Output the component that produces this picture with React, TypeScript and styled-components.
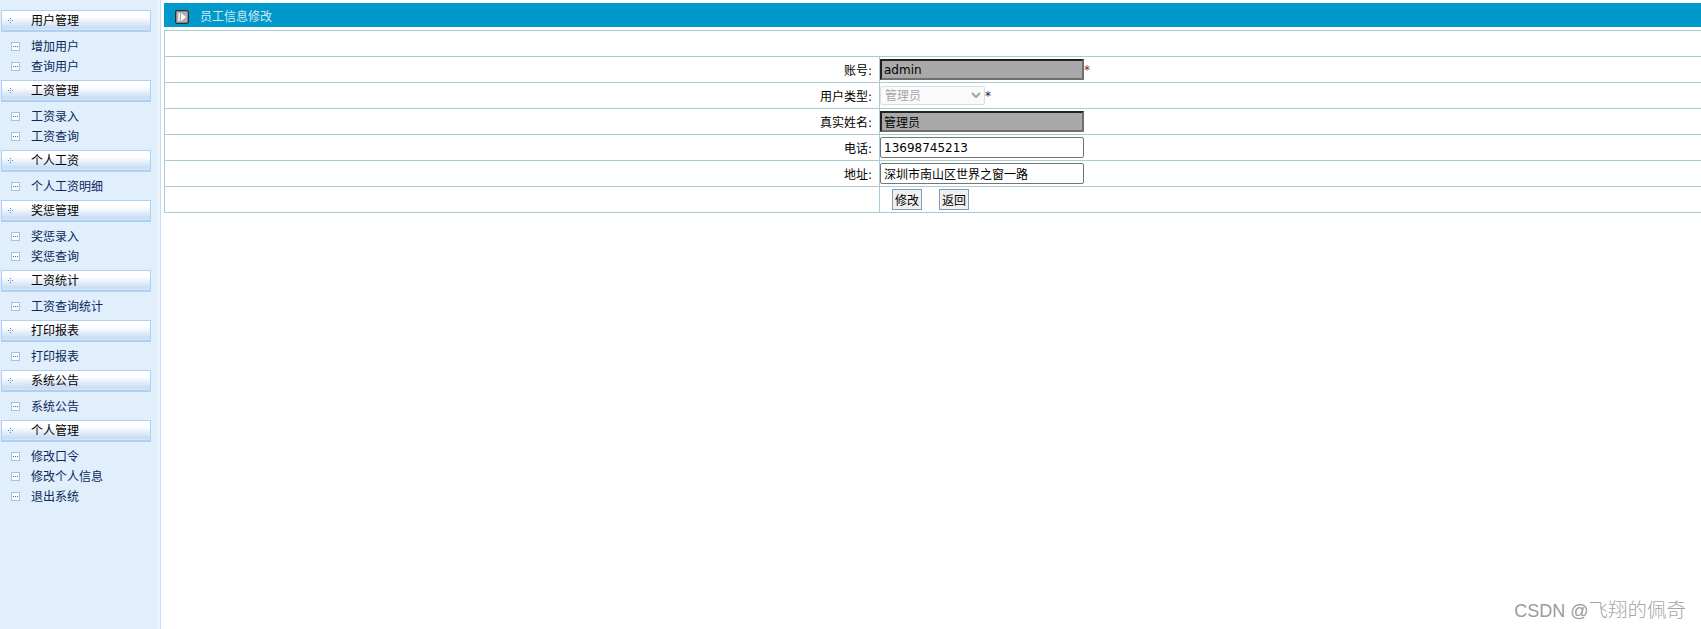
import styled, { createGlobalStyle } from "styled-components";

const GlobalStyle = createGlobalStyle`
  html, body {
    margin: 0;
    padding: 0;
    height: 100%;
    overflow: hidden;
    background: #fff;
  }
  #root {
    height: 100%;
  }
`;

const font = `"DejaVu Sans", "Noto Sans CJK SC", sans-serif`;

const Page = styled.div`
  display: flex;
  height: 100%;
  font: 12px ${font};
  color: #000;
`;

const Sidebar = styled.aside`
  width: 156px;
  flex: none;
  padding-top: 10px;
  box-sizing: border-box;
  background: #e1eefb;
`;

const SideEdge = styled.div`
  width: 4px;
  flex: none;
  background: linear-gradient(to right, #e1eefb, #edf4fc);
`;

const SideLine = styled.div`
  width: 1px;
  flex: none;
  background: #c6def7;
`;

const GroupTitle = styled.div`
  display: flex;
  align-items: center;
  width: 150px;
  height: 22px;
  margin-left: 1px;
  box-sizing: border-box;
  border: 1px solid #aed0f3;
  border-bottom-width: 2px;
  background: linear-gradient(to bottom, #ffffff 0%, #ffffff 30%, #c9dcf3 90%, #dbe8f7 100%);
  color: #000;
  line-height: 20px;
  svg {
    margin-left: 6px;
    margin-right: 17px;
    flex: none;
  }
`;

const ItemList = styled.ul`
  list-style: none;
  margin: 0;
  padding: 4px 0;
`;

const Item = styled.li`
  display: flex;
  align-items: center;
  height: 20px;
  padding-left: 11px;
  color: #0a2a5c;
  svg {
    margin-right: 11px;
    flex: none;
  }
  span {
    position: relative;
    top: -1px;
  }
`;

const Main = styled.main`
  flex: 1;
  min-width: 0;
  padding: 3px 0 0 3px;
  overflow: hidden;
`;

const TitleBar = styled.div`
  display: flex;
  align-items: center;
  height: 24px;
  padding-left: 11px;
  background: #0099cc;
  color: #d5e8f2;
  svg {
    margin-right: 11px;
    margin-top: 3px;
  }
`;

const FormTable = styled.table`
  width: calc(100% + 2px);
  margin-top: 3px;
  border-collapse: collapse;
  table-layout: fixed;
  td {
    height: 26px;
    padding: 0;
    border: 1px solid #a8cbd6;
    box-sizing: border-box;
  }
`;

const LabelCol = styled.col`
  width: 715px;
`;

const LabelCell = styled.td`
  text-align: right;
  padding-right: 7px !important;
`;

const FieldCell = styled.td`
  white-space: nowrap;
`;

const TextInput = styled.input<{ $locked?: boolean }>`
  display: inline-block;
  vertical-align: middle;
  width: 204px;
  height: 21px;
  box-sizing: border-box;
  font: 12px ${font};
  color: #000;
  outline: none;
  ${(p) =>
    p.$locked
      ? `
    padding: 0 2px;
    background: #a9a9a9;
    border: 2px solid #6f6f6f;
    border-top-color: #222;
    border-left-color: #222;
  `
      : `
    padding: 0 3px;
    background: #fff;
    border: 1px solid #767676;
    border-radius: 2px;
  `}
`;

const TypeSelect = styled.select`
  display: inline-block;
  vertical-align: middle;
  width: 105px;
  height: 19px;
  box-sizing: border-box;
  font: 12px ${font};
  color: #a6a6a6;
  background-color: #fafafa;
  border: 1px solid #dedede;
  border-radius: 2px;
  padding: 0;
  opacity: 1;
`;

const Mark = styled.span<{ $red?: boolean }>`
  color: ${(p) => (p.$red ? "#8c1c1c" : "#10233c")};
  vertical-align: middle;
`;

const ActionButton = styled.button`
  width: 30px;
  height: 21px;
  box-sizing: border-box;
  padding: 0;
  margin-left: 12px;
  margin-right: 5px;
  vertical-align: middle;
  font: 12px ${font};
  color: #000;
  background: #f0f0f0;
  border: 1px solid #7f9db9;
`;

const Watermark = styled.div`
  position: absolute;
  right: 15px;
  bottom: 7px;
  color: #9a9a9a;
  font: 18px "Liberation Sans", "Noto Sans CJK SC", sans-serif;
  line-height: 21px;
  span {
    font-size: 19.5px;
    font-weight: 300;
    color: #a6a6a6;
  }
`;

const GroupDots = () => (
  <svg width="6" height="6" viewBox="0 0 6 6" shapeRendering="crispEdges">
    <rect x="2" y="0" width="1" height="1" fill="#2f8fe8" />
    <rect x="0" y="2" width="1" height="1" fill="#2f8fe8" />
    <rect x="2" y="2" width="1" height="1" fill="#7fbcf2" />
    <rect x="4" y="2" width="1" height="1" fill="#2f8fe8" />
    <rect x="2" y="4" width="1" height="1" fill="#2f8fe8" />
  </svg>
);

const ItemBox = () => (
  <svg width="9" height="9" viewBox="0 0 9 9" shapeRendering="crispEdges">
    <rect x="0.5" y="0.5" width="8" height="8" fill="#fff" stroke="#9cc6ee" />
    <rect x="2" y="4" width="1" height="1" fill="#2a6fc0" />
    <rect x="4" y="4" width="1" height="1" fill="#2a6fc0" />
    <rect x="6" y="4" width="1" height="1" fill="#2a6fc0" />
  </svg>
);

const PlayIcon = () => (
  <svg width="14" height="14" viewBox="0 0 14 14">
    <rect x="0.5" y="0.5" width="13" height="13" rx="1.5" fill="#8a8a8a" stroke="#2e2e2e" />
    <rect x="2" y="2" width="10" height="10" fill="#b0b0b0" />
    <path d="M6 3 L11 7 L6 11 Z" fill="#fff" />
    <rect x="3" y="3" width="2" height="8" fill="#e2e2e2" />
  </svg>
);

const menu = [
  { title: "用户管理", items: ["增加用户", "查询用户"] },
  { title: "工资管理", items: ["工资录入", "工资查询"] },
  { title: "个人工资", items: ["个人工资明细"] },
  { title: "奖惩管理", items: ["奖惩录入", "奖惩查询"] },
  { title: "工资统计", items: ["工资查询统计"] },
  { title: "打印报表", items: ["打印报表"] },
  { title: "系统公告", items: ["系统公告"] },
  { title: "个人管理", items: ["修改口令", "修改个人信息", "退出系统"] },
];

export default function App() {
  return (
    <>
      <GlobalStyle />
      <Page>
        <Sidebar>
          {menu.map((group) => (
            <div key={group.title}>
              <GroupTitle>
                <GroupDots />
                {group.title}
              </GroupTitle>
              <ItemList>
                {group.items.map((item) => (
                  <Item key={item}>
                    <ItemBox />
                    <span>{item}</span>
                  </Item>
                ))}
              </ItemList>
            </div>
          ))}
        </Sidebar>
        <SideEdge />
        <SideLine />
        <Main>
          <TitleBar>
            <PlayIcon />
            员工信息修改
          </TitleBar>
          <FormTable>
            <colgroup>
              <LabelCol />
              <col />
            </colgroup>
            <tbody>
              <tr>
                <td colSpan={2}></td>
              </tr>
              <tr>
                <LabelCell>账号:</LabelCell>
                <FieldCell>
                  <TextInput $locked readOnly defaultValue="admin" />
                  <Mark $red>*</Mark>
                </FieldCell>
              </tr>
              <tr>
                <LabelCell>用户类型:</LabelCell>
                <FieldCell>
                  <TypeSelect disabled defaultValue="管理员">
                    <option>管理员</option>
                  </TypeSelect>
                  <Mark>*</Mark>
                </FieldCell>
              </tr>
              <tr>
                <LabelCell>真实姓名:</LabelCell>
                <FieldCell>
                  <TextInput $locked readOnly defaultValue="管理员" />
                </FieldCell>
              </tr>
              <tr>
                <LabelCell>电话:</LabelCell>
                <FieldCell>
                  <TextInput defaultValue="13698745213" />
                </FieldCell>
              </tr>
              <tr>
                <LabelCell>地址:</LabelCell>
                <FieldCell>
                  <TextInput defaultValue="深圳市南山区世界之窗一路" />
                </FieldCell>
              </tr>
              <tr>
                <LabelCell></LabelCell>
                <FieldCell>
                  <ActionButton>修改</ActionButton>
                  <ActionButton>返回</ActionButton>
                </FieldCell>
              </tr>
            </tbody>
          </FormTable>
        </Main>
        <Watermark>
          CSDN @<span>飞翔的佩奇</span>
        </Watermark>
      </Page>
    </>
  );
}
